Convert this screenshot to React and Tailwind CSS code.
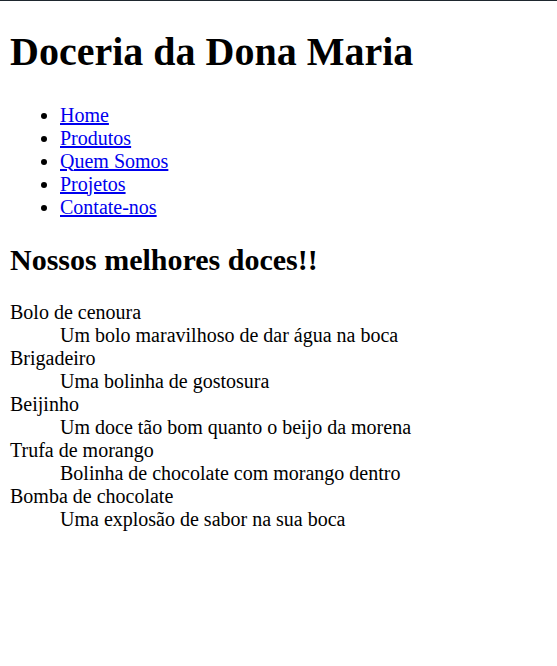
/**
 * Doceria da Dona Maria — plain HTML look, browser defaults at 125% zoom.
 */

const links = ['Home', 'Produtos', 'Quem Somos', 'Projetos', 'Contate-nos'];

const doces = [
  { nome: 'Bolo de cenoura', desc: 'Um bolo maravilhoso de dar água na boca' },
  { nome: 'Brigadeiro', desc: 'Uma bolinha de gostosura' },
  { nome: 'Beijinho', desc: 'Um doce tão bom quanto o beijo da morena' },
  { nome: 'Trufa de morango', desc: 'Bolinha de chocolate com morango dentro' },
  { nome: 'Bomba de chocolate', desc: 'Uma explosão de sabor na sua boca' },
];

export default function App() {
  return (
    <div className="min-h-[666px] bg-white text-black text-[20px] leading-[normal] font-['Liberation_Serif','Times_New_Roman',serif] border-t border-[#1e272e]">
      <div className="px-[10px] pb-[10px]">
        {/* Header */}
        <h1 className="text-[40px] font-bold leading-[normal] mt-[27px] mb-[28.5px]">
          Doceria da Dona Maria
        </h1>

        {/* Menu */}
        <ul className="list-disc pl-[50px] my-[20px]">
          {links.map(l => (
            <li key={l}>
              <a href="#" className="text-[#0000ee] underline">{l}</a>
            </li>
          ))}
        </ul>

        {/* Doces */}
        <h2 className="text-[30px] font-bold leading-[normal] mt-[24px] mb-[24.9px]">
          Nossos melhores doces!!
        </h2>
        <dl className="my-[20px]">
          {doces.map(d => (
            <div key={d.nome}>
              <dt>{d.nome}</dt>
              <dd className="ml-[50px]">{d.desc}</dd>
            </div>
          ))}
        </dl>
      </div>
    </div>
  );
}
